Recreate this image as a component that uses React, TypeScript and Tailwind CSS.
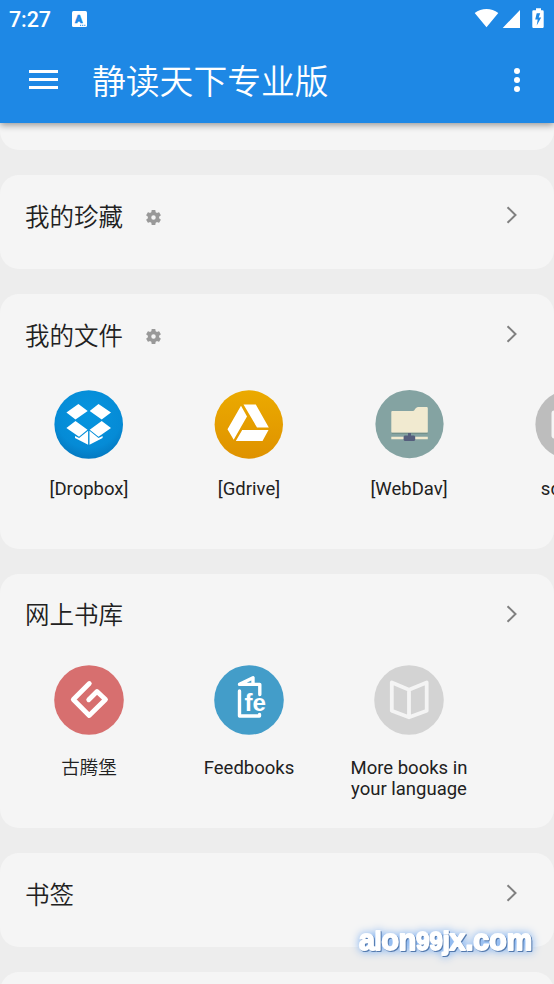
import { FC, ReactNode } from "react";

const Gear: FC = () => (
  <svg viewBox="2 2 20 20" className="w-[15px] h-[15px]" fill="#999">
    <path d="M19.43 12.98c.04-.32.07-.64.07-.98s-.03-.66-.07-.98l2.11-1.65c.19-.15.24-.42.12-.64l-2-3.46c-.12-.22-.39-.3-.61-.22l-2.49 1c-.52-.4-1.08-.73-1.69-.98l-.38-2.65A.488.488 0 0 0 14 2h-4c-.25 0-.46.18-.49.42l-.38 2.65c-.61.25-1.17.59-1.69.98l-2.49-1c-.23-.09-.49 0-.61.22l-2 3.46c-.13.22-.07.49.12.64l2.11 1.65c-.04.32-.07.65-.07.98s.03.66.07.98l-2.11 1.65c-.19.15-.24.42-.12.64l2 3.46c.12.22.39.3.61.22l2.49-1c.52.4 1.08.73 1.69.98l.38 2.65c.03.24.24.42.49.42h4c.25 0 .46-.18.49-.42l.38-2.65c.61-.25 1.17-.59 1.69-.98l2.49 1c.23.09.49 0 .61-.22l2-3.46c.12-.22.07-.49-.12-.64l-2.11-1.65zM12 15a3 3 0 1 1 0-6 3 3 0 0 1 0 6z" />
  </svg>
);

const Chevron: FC = () => (
  <svg viewBox="0 0 12 18" className="w-3 h-[18px]" fill="none" stroke="#808080" strokeWidth="2">
    <path d="M1.5 1.2 9.5 9l-8 7.8" />
  </svg>
);

const Dropbox: FC = () => (
  <svg viewBox="0 0 70 70" className="w-[70px] h-[70px]">
    <defs>
      <radialGradient id="dbx" cx=".5" cy=".35" r=".65">
        <stop offset="0" stopColor="#0795df" />
        <stop offset=".75" stopColor="#058bd6" />
        <stop offset="1" stopColor="#0479c1" />
      </radialGradient>
    </defs>
    <circle cx="34.7" cy="34.5" r="34.3" fill="url(#dbx)" />
    <g fill="#fff" transform="translate(-.3 0)">
      <path d="M24.7 14 34 20.9 21.8 29.5 12.7 22.4zM44.8 14 57.3 22.4 48 29.5 36 20.9zM21.8 31 33.8 39.7 25.3 46.7 12.7 38zM48 31 57.3 38 44.8 46.7 36 39.7z" />
      <path d="M34.4 40.7v14.1L21.3 48v-2.1l4.1 2.2zM35.8 40.7v14.1L48.9 48v-2.1l-4.1 2.2z" />
    </g>
  </svg>
);

const Gdrive: FC = () => (
  <svg viewBox="0 0 70 70" className="w-[70px] h-[70px]">
    <defs>
      <linearGradient id="gd" x1="0" y1="0" x2="0" y2="1">
        <stop offset="0" stopColor="#ebaa00" />
        <stop offset="1" stopColor="#df9200" />
      </linearGradient>
    </defs>
    <circle cx="34.8" cy="34.5" r="34.2" fill="url(#gd)" />
    <g fill="#fff">
      <path d="M27 15.8 33 26.5 19.7 49.8 13.5 39.2zM29.5 14.5H41.8L54.8 37.5H43zM28.2 40H54.5L48.5 51H21.8z" />
    </g>
  </svg>
);

const WebDav: FC = () => (
  <svg viewBox="0 0 70 70" className="w-[70px] h-[70px]">
    <g transform="translate(.8 0)">
      <circle cx="34.7" cy="34.1" r="34.1" fill="#84a3a2" />
      <path d="M17.5 21h20.8c1.7 0 2.2-4 5-4h8.5q1.2 0 1.2 1.2v23.6q0 1-1 1H17.5q-1 0-1-1V22q0-1 1-1z" fill="#f1ead0" />
      <path d="M17 43.3h35.7" stroke="#708d86" />
      <path d="M16.5 48h36.5" stroke="#f1ead0" strokeWidth="2.4" />
      <path d="M33.2 43h3v2.6h3.2l1 1v3.5l-1 1h-9.6l-1-1v-3.5l1-1h3.4z" fill="#555e7c" />
    </g>
  </svg>
);

const Sdcard: FC = () => (
  <svg viewBox="0 0 70 70" className="w-[70px] h-[70px]">
    <circle cx="35.7" cy="34.5" r="34.3" fill="#bdbdbd" />
    <rect x="17.5" y="20.5" width="37" height="28" rx="3" fill="#f5f5f5" />
  </svg>
);

const Gutenberg: FC = () => (
  <svg viewBox="0 0 70 70" className="w-[70px] h-[70px]">
    <circle cx="35" cy="35" r="34.8" fill="#d76f6f" />
    <path
      d="M35.3 18.5 19.3 34.5 35.2 50.5 51.5 34.5 43 26.5 34.7 34.7"
      fill="none"
      stroke="#fff"
      strokeWidth="4.8"
      strokeLinecap="round"
      strokeLinejoin="round"
    />
  </svg>
);

const Feedbooks: FC = () => (
  <svg viewBox="0 0 70 70" className="w-[70px] h-[70px]">
    <circle cx="35" cy="35" r="34.8" fill="#439dc9" />
    <g fill="none" stroke="#fff" strokeWidth="3.4" strokeLinejoin="round" strokeLinecap="round">
      <path d="M25.5 26v25H45.5v-1.5M45.8 29.5V19.4H25.5L39 12.8v6" />
    </g>
    <text x="30.5" y="45.5" fill="#fff" fontFamily="Liberation Sans" fontWeight="700" fontSize="23.5" textLength="21.5" lengthAdjust="spacingAndGlyphs">fe</text>
  </svg>
);

const MoreBooks: FC = () => (
  <svg viewBox="0 0 70 70" className="w-[70px] h-[70px]">
    <circle cx="35" cy="35" r="34.8" fill="#d3d3d3" />
    <path
      d="M35 24.8 17.8 17.5V45.7L35 52.3 52.7 45.7V17.5zV52.3"
      fill="none"
      stroke="#f4f4f4"
      strokeWidth="3.8"
      strokeLinejoin="round"
    />
  </svg>
);

type HeadProps = { title: string; gear?: boolean };

const Head: FC<HeadProps> = ({ title, gear }) => (
  <div className="flex items-center h-[81px] pl-[25px] pr-9">
    <h2 className="text-[24.5px] leading-9 mt-1 font-[350]">{title}</h2>
    {gear && (
      <span className="ml-[23px] mt-[3px]">
        <Gear />
      </span>
    )}
    <span className="ml-auto -mt-px">
      <Chevron />
    </span>
  </div>
);

type ItemProps = { label: ReactNode; icon: ReactNode };

const Item: FC<ItemProps> = ({ label, icon }) => (
  <div className="w-40 shrink-0 flex flex-col items-center">
    {icon}
    <span className="w-[126px] text-center text-[18.5px] leading-[21.5px]">{label}</span>
  </div>
);

export default function App() {
  return (
    <div className="relative w-[554px] h-[984px] overflow-hidden bg-[#ededed] text-[#212121] font-['Roboto','Noto_Sans_CJK_SC',sans-serif]">
      <header className="relative z-10 h-[123px] bg-[#1e88e5] text-white shadow-[0_2px_7px_rgba(0,0,0,0.4)]">
        <div className="flex h-[38px] items-center pl-[9px] pr-[10px]">
          <span className="text-[21.5px] leading-6 font-medium tracking-[-0.1px] mt-0.5">7:27</span>
          <svg viewBox="0 0 15 16" className="ml-[21px] w-[15px] h-4">
            <rect width="15" height="16" rx="1.5" fill="#fff" />
            <text x="3.1" y="12" fontSize="11" fontWeight="900" fontFamily="Roboto" fill="#1e88e5" stroke="#1e88e5" strokeWidth=".5">A</text>
            <path d="M8 14.3h6" stroke="#1e88e5" strokeWidth="1" strokeDasharray="1.2 .9" />
          </svg>
          <svg viewBox="0 0 70 22" className="ml-auto w-[70px] h-[22px]" fill="#fff">
            <path d="M.7 4.9C7.5-.4 17.5-.4 24.3 4.9L12.5 19.2zM46 2v17.9H28.7zM62 .2h5v2h1.5q1.2 0 1.2 1.2v15.4q0 1.2-1.2 1.2h-9q-1.2 0-1.2-1.2V3.4Q58.3 2.2 59.5 2.2H62z" />
            <path d="M62.7 5.2l-1.5 6.3h2.5l-1 6 4.5-8h-2.5l1.5-4.3z" fill="#1e88e5" />
          </svg>
        </div>
        <div className="flex h-[83px] items-center pl-[29px] pr-8">
          <div className="flex flex-col gap-[5px]">
            <i className="block w-[29px] h-[3px] bg-white" />
            <i className="block w-[29px] h-[3px] bg-white" />
            <i className="block w-[29px] h-[3px] bg-white" />
          </div>
          <h1 className="ml-[34px] mt-1.5 text-[33.8px] leading-[50px] font-[350]">静读天下专业版</h1>
          <div className="ml-auto flex flex-col gap-[3px] pr-[2px]">
            <i className="block w-[6px] h-[6px] rounded-full bg-white" />
            <i className="block w-[6px] h-[6px] rounded-full bg-white" />
            <i className="block w-[6px] h-[6px] rounded-full bg-white" />
          </div>
        </div>
      </header>

      <main className="flex flex-col gap-[25px]">
        <section className="h-[27px] rounded-b-[19px] bg-[#f5f5f5]" />
        <section className="h-[94px] rounded-[19px] bg-[#f5f5f5]">
          <Head title="我的珍藏" gear />
        </section>
        <section className="h-[254.5px] rounded-[19px] bg-[#f5f5f5] overflow-hidden">
          <Head title="我的文件" gear />
          <div className="flex pl-[9px] mt-[15px] [&_span]:mt-[18.5px]">
            <Item label="[Dropbox]" icon={<Dropbox />} />
            <Item label="[Gdrive]" icon={<Gdrive />} />
            <Item label="[WebDav]" icon={<WebDav />} />
            <Item label="sdcard" icon={<Sdcard />} />
          </div>
        </section>
        <section className="h-[254.5px] rounded-[19px] bg-[#f5f5f5] overflow-hidden">
          <Head title="网上书库" />
          <div className="flex pl-[9px] mt-[10.5px] [&_span]:mt-[22.5px]">
            <Item label={<b className="font-[350]">古腾堡</b>} icon={<Gutenberg />} />
            <Item label="Feedbooks" icon={<Feedbooks />} />
            <Item label="More books in your language" icon={<MoreBooks />} />
          </div>
        </section>
        <section className="h-[94px] rounded-[19px] bg-[#f5f5f5]">
          <Head title="书签" />
        </section>
        <section className="h-10 rounded-t-[19px] bg-[#f5f5f5]" />
      </main>

      <svg viewBox="0 0 178 42" className="absolute left-[357px] top-[923px] w-[178px] h-[42px] [filter:drop-shadow(1px_1px_0.5px_#5379ad)_drop-shadow(0_0_4px_#79adf0)]">
        <text x="2" y="26.5" textLength="173" lengthAdjust="spacingAndGlyphs" fill="#fff" stroke="#fff" strokeWidth="2" strokeLinejoin="round" fontFamily="Liberation Sans" fontWeight="700" fontSize="30">
          a<tspan fontSize="25">l</tspan>on<tspan fontSize="25">99</tspan><tspan fontSize="26">j</tspan>x.com
        </text>
      </svg>
    </div>
  );
}
